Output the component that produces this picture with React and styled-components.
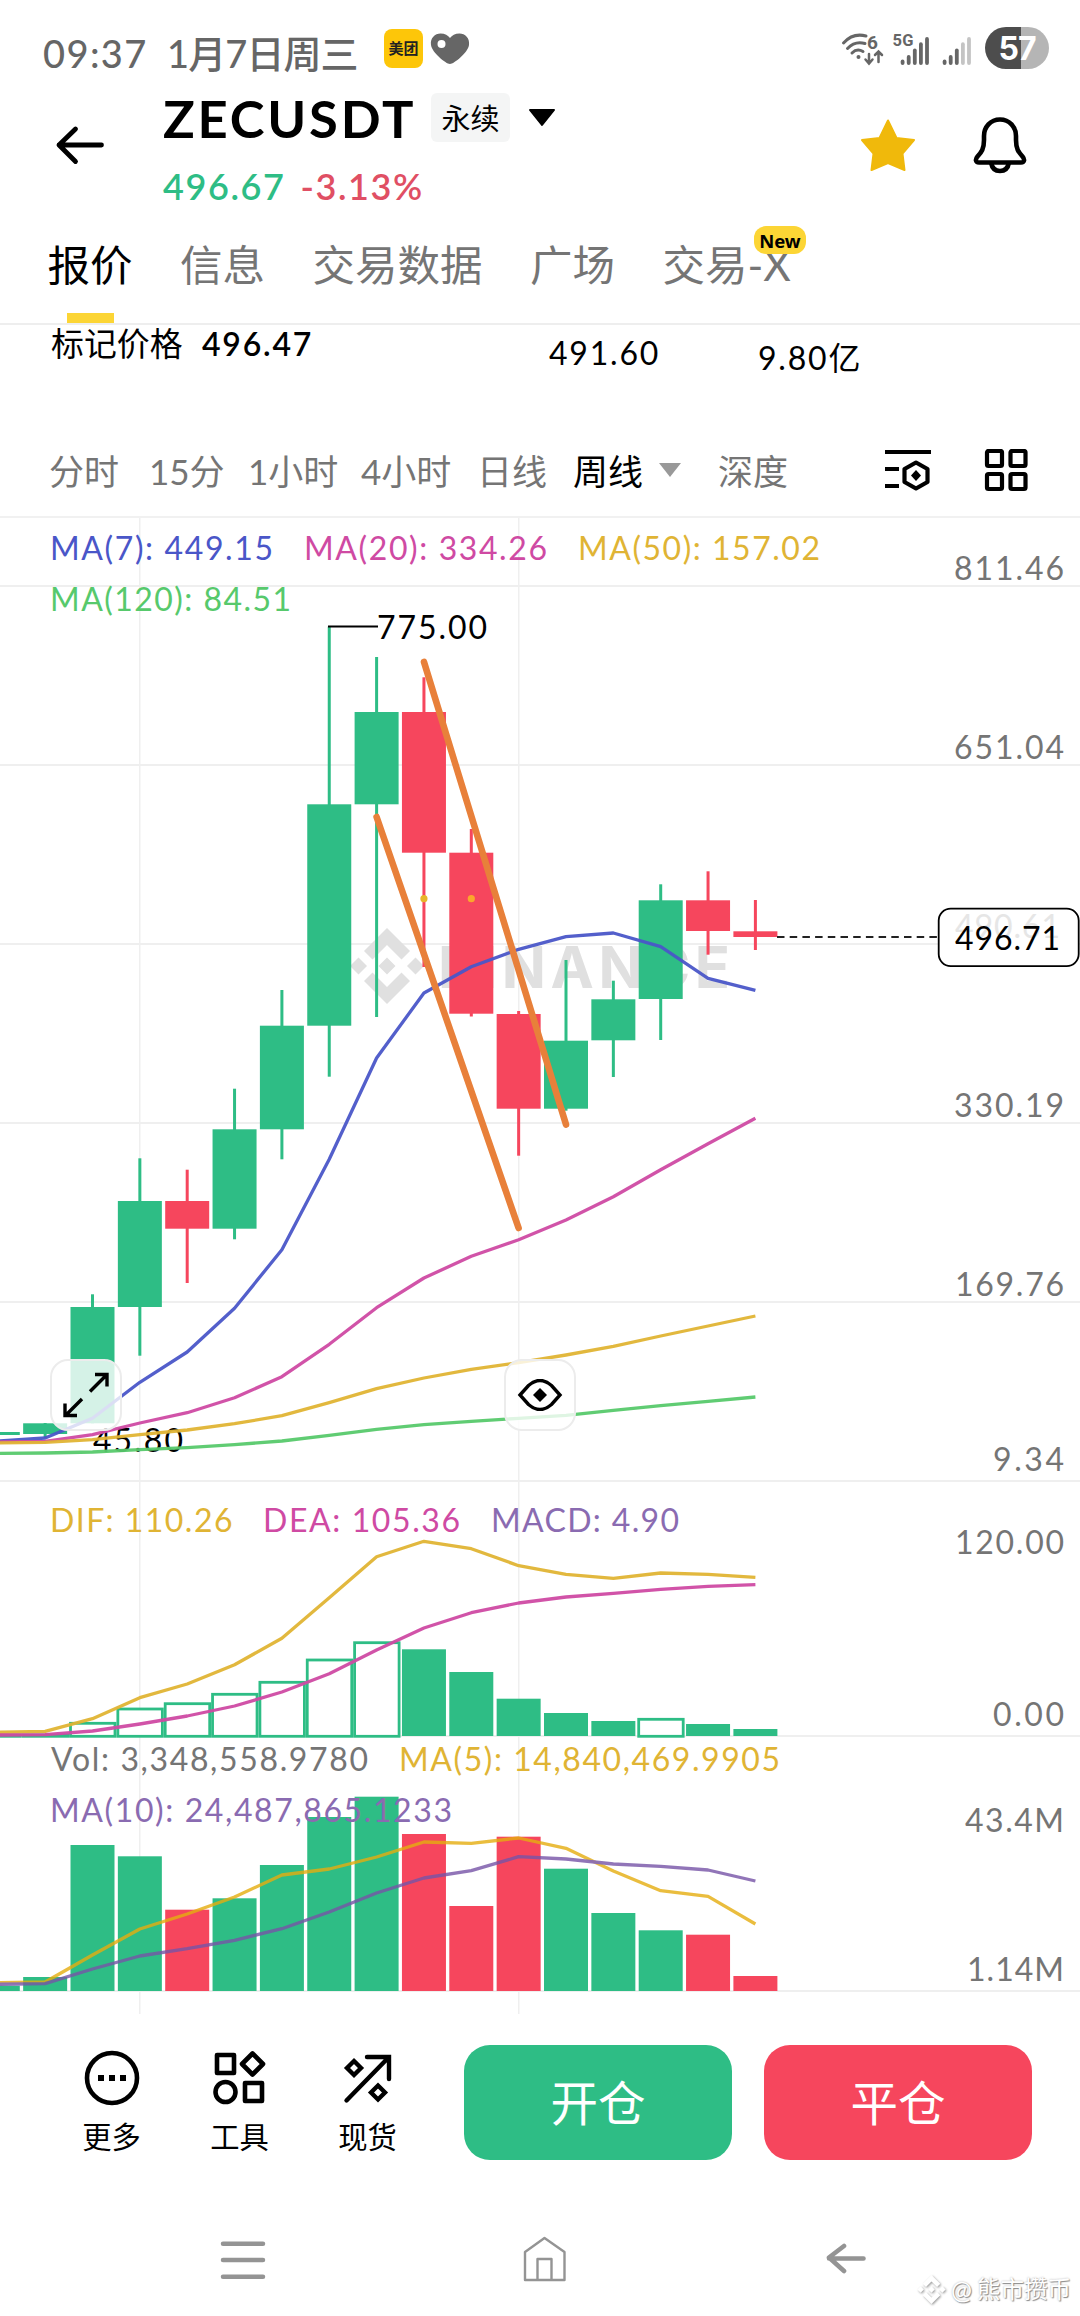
import styled, { createGlobalStyle } from "styled-components"

const up = '#2ebd85'
const down = '#f6465d'
const gold = '#e0b434'
const pink = '#cf4aa3'
const violet = '#8a6bb1'
const blue = '#4a56c8'
const lime = '#57c96c'
const grey = '#757575'

const GlobalStyle = createGlobalStyle`
    * { box-sizing: border-box; }
    body {
        margin: 0;
        background: #fff;
        font-family: Lato, "Noto Sans CJK SC", sans-serif;
        color: #000;
    }
`
const Page = styled.div`
    width: 1080px;
    height: 2316px;
    display: flex;
    flex-direction: column;
    background: #fff;
    overflow: hidden;
`

/* status bar */
const StatusBar = styled.div`
    height: 84px;
    flex: none;
    display: flex;
    align-items: flex-start;
    padding: 27px 31px 0 43px;
    color: #666;
`
const Clock = styled.span`
    font-size: 38px;
    line-height: 52px;
    font-weight: 500;
    letter-spacing: ${p => p.$spacing}px;
    width: ${p => p.$w}px;
    white-space: nowrap;
`
const AppBadge = styled.span`
    width: 39px;
    height: 39px;
    margin: 2px 7px 0 0;
    border-radius: 8px;
    background: #fdc609;
    color: #222;
    font-size: 15px;
    font-weight: 700;
    line-height: 38px;
    text-align: center;
`
const StatusIcons = styled.svg`
    margin-left: auto;
`
const Battery = styled.span`
    width: 64px;
    height: 42px;
    margin-left: 14px;
    border-radius: 21px;
    background: linear-gradient(90deg, #4d4d4d 56%, #b5b5b5 56%);
    color: #fff;
    font: 700 32px/43px Inter, sans-serif;
    letter-spacing: -1px;
    text-align: center;
`

/* header */
const Header = styled.header`
    height: 129px;
    flex: none;
    display: flex;
    align-items: flex-start;
    padding: 9px 52px 0 54px;
`
const BackIcon = styled.svg`
    margin-top: 31px;
`
const Title = styled.div`
    margin-left: 58px;
    flex: 1;
`
const NameRow = styled.div`
    display: flex;
    height: 49px;
`
const Name = styled.h1`
    margin: 0;
    width: 268px;
    font-size: 52.5px;
    font-weight: 700;
    line-height: 50px;
    letter-spacing: 2.8px;
    white-space: nowrap;
`
const Tag = styled.span`
    width: 79px;
    height: 49px;
    margin-right: 18px;
    border-radius: 6px;
    background: #f4f5f5;
    font-size: 29px;
    line-height: 51px;
    text-align: center;
`
const Caret = styled.svg`
    margin-top: ${p => p.$top || 0}px;
`
const PriceRow = styled.div`
    display: flex;
    gap: 15px;
    margin-top: 22px;
    font-size: 36px;
    font-weight: 600;
    line-height: 44px;
`
const Price = styled.span`
    color: ${p => p.$color};
    letter-spacing: ${p => p.$spacing}px;
`
const HeaderIcons = styled.div`
    display: flex;
    gap: 56px;
    padding-top: 23px;
`

/* tabs */
const Tabs = styled.nav`
    height: 112px;
    flex: none;
    display: flex;
    gap: 47.5px;
    padding: 22px 0 0 47.5px;
    border-bottom: 2px solid #eee;
`
const Tab = styled.span`
    position: relative;
    font-size: 42.5px;
    line-height: 60px;
    height: 88px;
    white-space: nowrap;
    color: ${p => p.$active ? '#000' : grey};
    ${p => p.$active && `
    &::after {
        content: '';
        position: absolute;
        left: 19px;
        bottom: 0;
        width: 47px;
        height: 10px;
        background: #fcd535;
    }`}
`
const NewBadge = styled.em`
    position: absolute;
    right: -15px;
    top: -9px;
    width: 52px;
    height: 28px;
    border-radius: 12px;
    background: #fcd535;
    color: #000;
    font: 700 18.5px/29px "Noto Sans", sans-serif;
    text-align: center;
`

/* stats under the tabs */
const Stats = styled.div`
    height: 100px;
    flex: none;
    display: grid;
    grid-template-columns: 498px 209px auto;
    align-items: start;
    padding-left: 51px;
    font-size: 32px;
    line-height: 38px;
`
const Stat = styled.div`
    padding-top: ${p => p.$top || 0}px;
    letter-spacing: 1.8px;
    white-space: nowrap;
`
const StatLabel = styled.span`
    display: inline-block;
    width: 151px;
    font-size: 32.9px;
    letter-spacing: 0;
`
const Strong = styled.b`
    font-weight: 600;
`

/* interval selector */
const Intervals = styled.div`
    height: 93px;
    flex: none;
    display: grid;
    grid-template-columns: 100px 99px 113px 116px 96px 145px 1fr 46px 149px;
    align-items: center;
    padding-left: 49px;
    border-bottom: 2px solid #f1f1f1;
    font-size: 35px;
    line-height: 40px;
`
const Interval = styled.span`
    display: flex;
    align-items: center;
    gap: 15px;
    color: ${p => p.$active ? '#000' : grey};
    white-space: nowrap;
`

/* chart */
const ChartArea = styled.div`
    position: relative;
    height: 1496px;
    flex: none;
`
const ChartSvg = styled.svg`
    display: block;
`
const Floating = styled.button`
    position: absolute;
    left: ${p => p.$left}px;
    top: 841px;
    width: 72px;
    height: 72px;
    padding: 0;
    display: flex;
    align-items: center;
    justify-content: center;
    border: 2px solid #ececec;
    border-radius: 18px;
    background: rgba(255, 255, 255, 0.8);
`

/* bottom */
const Actions = styled.div`
    height: 180px;
    flex: none;
    display: flex;
    align-items: flex-start;
    padding: 31px 48px 0 47.5px;
`
const Tool = styled.div`
    width: 128px;
    display: flex;
    flex-direction: column;
    align-items: center;
    gap: 13px;
    padding-top: 5px;
    font-size: 29.3px;
    line-height: 36px;
`
const TradeButton = styled.button`
    width: 268px;
    height: 115px;
    margin-left: 32px;
    padding: 0;
    border: 0;
    border-radius: 26px;
    background: ${p => p.$color};
    color: #fff;
    font: 400 47.5px/60px Lato, "Noto Sans CJK SC", sans-serif;
`
const FirstTradeButton = styled(TradeButton)`
    margin-left: 32.5px;
`
const SystemNav = styled.div`
    position: relative;
    flex: 1;
    display: flex;
    padding: 41px 0 0 219px;
`
const NavIcon = styled.svg`
    margin-right: ${p => p.$gap || 0}px;
`
const Author = styled.div`
    position: absolute;
    left: 917px;
    top: 78px;
    display: flex;
    align-items: center;
    color: #fff;
    font-size: 23.5px;
    line-height: 34px;
    white-space: nowrap;
    text-shadow: 1px 1px 1px #8a8a8a, 0 0 2px #b5b5b5;
    svg {
        margin-right: 5px;
        filter: drop-shadow(1px 1px 1px #999);
    }
`
const AtSign = styled.span`
    width: 26px;
    font-size: 25px;
`

// x of the n-th candle
const cx = (n) => -2.2 + n * 47.35

// [up?, high, open/close top, open/close bottom, low]
const candles = [
    [1, 1432, 1432, 1435, 1435],
    [1, 1423, 1423.3, 1434, 1438],
    [1, 1294.3, 1307, 1423.3, 1423.3],
    [1, 1158.3, 1201, 1307, 1355.7],
    [0, 1169.7, 1201, 1228.7, 1283],
    [1, 1088.7, 1129.3, 1228.7, 1239.3],
    [1, 990, 1025.7, 1129.3, 1159.3],
    [1, 626.7, 804.3, 1025.7, 1076.7],
    [1, 657, 712, 804.3, 1017],
    [0, 677.3, 712, 852.7, 967],
    [0, 829, 852.7, 1013.7, 1016.5],
    [0, 1011, 1014, 1108.7, 1155.7],
    [1, 960, 1040.7, 1108.7, 1110.7],
    [1, 980.7, 999.3, 1040.3, 1077],
    [1, 884.3, 900.3, 999, 1040],
    [0, 871.3, 900.3, 931, 954.7],
    [0, 900, 931.3, 937, 950],
]

const ma7 = [1441, 1438, 1418.3, 1382.3, 1352, 1308.3, 1249.7, 1159.3, 1058, 993, 966.7, 949.3, 936.7, 933, 946.7, 978.3, 990.3]
const ma20 = [1442, 1441.3, 1434.7, 1423, 1412.7, 1397.7, 1376.7, 1344.3, 1307.7, 1278, 1256.3, 1239.7, 1220, 1196.7, 1169.7, 1143.7, 1118.3]
const ma50 = [1443, 1442.3, 1439.7, 1434.7, 1430, 1423.7, 1415.7, 1402.7, 1388.7, 1378, 1369.3, 1362.7, 1355, 1346.3, 1336, 1326, 1316]
const ma120 = [1453.3, 1453, 1452, 1449.7, 1447.7, 1444.7, 1441, 1435.3, 1429.3, 1424.7, 1421.3, 1418.3, 1415.3, 1410.3, 1405.7, 1401.3, 1397]

const dif = [1732.3, 1731.3, 1718.7, 1697.7, 1684, 1664.7, 1638.3, 1597.7, 1556.7, 1541.3, 1548.7, 1565.7, 1574.3, 1578.3, 1573, 1574.3, 1577.3]
const dea = [1735, 1734.7, 1731, 1724, 1716, 1706, 1692, 1673.7, 1650, 1628, 1612.7, 1603, 1597, 1593.3, 1589.3, 1586.3, 1584.7]
// [top, hollow?]
const macd = [
    [1735, 1], [1735, 1], [1723.3, 1], [1709, 1], [1703.7, 1], [1694.3, 1], [1682.3, 1], [1660, 1], [1642.7, 1],
    [1649.3], [1672], [1698.7], [1713], [1721], [1719.3, 1], [1724], [1729],
]

// [up?, top]
const volume = [
    [1, 1985.7], [1, 1977], [1, 1845], [1, 1856.3], [0, 1909.7], [1, 1898.3], [1, 1865], [1, 1817], [1, 1796.7],
    [0, 1834], [0, 1906], [0, 1836.7], [1, 1868.7], [1, 1913], [1, 1930.3], [0, 1934.7], [0, 1976],
]
const vol5 = [1982.7, 1982, 1955, 1929, 1914, 1897, 1875, 1869, 1857, 1842, 1843.3, 1838, 1848.3, 1871, 1890.7, 1896.3, 1924]
const vol10 = [1984.3, 1983.7, 1969, 1956, 1948.7, 1940.3, 1928.7, 1912, 1893, 1878, 1870.7, 1856.7, 1859, 1864, 1866.3, 1870, 1881]

// [text, left, right, baseline, color]
const legends = [
    ['MA(7): 449.15', 50, 273, 560, blue],
    ['MA(20): 334.26', 304, 547, 560, pink],
    ['MA(50): 157.02', 578, 820, 560, gold],
    ['MA(120): 84.51', 50, 291, 610.7, lime],
    ['DIF: 110.26', 50, 232.5, 1532, gold],
    ['DEA: 105.36', 263, 460, 1532, pink],
    ['MACD: 4.90', 491, 679, 1532, violet],
    ['Vol: 3,348,558.9780', 51, 368, 1770.7, grey],
    ['MA(5): 14,840,469.9905', 399, 780, 1770.7, gold],
    ['MA(10): 24,487,865.1233', 50, 452, 1821.7, violet],
]
const axis = [
    ['811.46', 954, 1064, 580],
    ['651.04', 954, 1064, 758.7],
    ['330.19', 954, 1064, 1117],
    ['169.76', 955, 1064, 1296],
    ['9.34', 993, 1064, 1471],
    ['120.00', 955, 1064, 1553.7],
    ['0.00', 993, 1064, 1725.7],
    ['43.4M', 965, 1064, 1831.7],
    ['1.14M', 967, 1064, 1980.7],
]

const Line = ({ data, color }) => (
    <polyline
        points={data.map((y, i) => `${cx(i)},${y}`).join(' ')}
        fill="none" stroke={color} strokeWidth="3.300" strokeLinejoin="round" opacity="0.95"
    />
)

const Label = ({ text, left, right, y, color }) => (
    <text x={left} y={y} fill={color} textLength={right - left} fontSize="32" fontFamily="Lato, sans-serif">{text}</text>
)

// four chevrons around a diamond, drawn on a 76px box
const Logo = ({ x = 0, y = 0, size = 76, color }) => (
    <svg x={x} y={y} width={size} height={size} viewBox="0 0 76 76" fill={color}>
        <path d="M38 0 L61 23 L52.5 31.500 L38 17 L23.500 31.500 L15 23 Z" />
        <path d="M38 76 L61 53 L52.5 44.500 L38 59 L23.500 44.500 L15 53 Z" />
        <path d="M38 29.500 L46.500 38 L38 46.500 L29.500 38 Z" />
        <path d="M9.500 29.500 L18 38 L9.500 46.500 L1 38 Z" />
        <path d="M66.500 29.500 L75 38 L66.500 46.500 L58 38 Z" />
    </svg>
)

const Chart = () => (
    <ChartArea>
        {/* y runs in screen pixels, the area starts at 518 */}
        <ChartSvg width="1080" height="1496" viewBox="0 518 1080 1496">
            <g fill="#efefef">
                {[585, 764, 943, 1122, 1301, 1480, 1735, 1990].map(y => <rect key={y} x="0" y={y} width="1080" height="2" />)}
                {[139, 518].map(x => <rect key={x} x={x} y="518" width="1.5" height="1496" />)}
            </g>

            <Logo x={349} y={928} color="#e0e0e0" />
            <text x="438" y="987.5" fontSize="58" fontWeight="700" fontFamily="Inter, sans-serif" fill="#e0e0e0" textLength="292">BINANCE</text>

            {candles.map(([isUp, high, top, bottom, low], i) => (
                <g key={i} fill={isUp ? up : down}>
                    <rect x={cx(i) - 1.5} y={high} width="3" height={low - high} />
                    <rect x={cx(i) - 22} y={top} width="44" height={bottom - top} />
                </g>
            ))}

            <rect x="328" y="625.5" width="50" height="2" fill="#000" />
            <Label text="775.00" left={377} right={487} y={638.7} color="#000" />
            <Label text="45.80" left={93} right={183} y={1452.3} color="#000" />

            <Line data={ma7} color={blue} />
            <Line data={ma20} color={pink} />
            <Line data={ma50} color={gold} />
            <Line data={ma120} color={lime} />

            <circle cx={cx(9)} cy="898.7" r="3.6" fill="#e8b52a" />
            <circle cx={cx(10)} cy="898.7" r="3.6" fill="#fba62c" />
            <g stroke="#e8803a" strokeWidth="6.600" strokeLinecap="round">
                <line x1="376.600" y1="817" x2="518.600" y2="1228" />
                <line x1="424" y1="662" x2="566" y2="1124.500" />
            </g>

            <line x1="777" y1="937" x2="938" y2="937" stroke="#222" strokeWidth="2" strokeDasharray="7.500 5.200" />
            <rect x="938.700" y="908.600" width="140" height="57.500" rx="12" fill="#fff" stroke="#000" strokeWidth="1.800" />
            <Label text="490.61" left={955} right={1060} y={937.7} color="#e6e6e6" />
            <Label text="496.71" left={955} right={1060} y={949.7} color="#000" />

            {macd.map(([top, hollow], i) => hollow
                ? <rect key={i} x={cx(i) - 22} y={top} width="44.500" height={1736.3 - top} fill="#fff" stroke={up} strokeWidth="2.800" />
                : <rect key={i} x={cx(i) - 22} y={top} width="44" height={1736 - top} fill={up} />
            )}
            <Line data={dif} color={gold} />
            <Line data={dea} color={pink} />

            {volume.map(([isUp, top], i) => (
                <rect key={i} x={cx(i) - 22} y={top} width="44" height={1991 - top} fill={isUp ? up : down} />
            ))}
            <g opacity="0.85">
                <Line data={vol5} color="#e5ad10" />
                <Line data={vol10} color="#7654a6" />
            </g>

            {legends.map(([text, left, right, y, color]) => (
                <Label key={text} text={text} left={left} right={right} y={y} color={color} />
            ))}
            {axis.map(([text, left, right, y]) => (
                <Label key={text} text={text} left={left} right={right} y={y} color={grey} />
            ))}
        </ChartSvg>

        <Floating $left={50}>
            <svg width="46" height="46" viewBox="0 0 46 46" fill="none" stroke="#000" strokeWidth="3.400">
                <path d="M27 19.500 L43 3.500 M32 2.500 H44 V14.500" />
                <path d="M19 27 L3 43 M2 31.500 V43.500 H14" />
            </svg>
        </Floating>
        <Floating $left={504}>
            <svg width="46" height="32" viewBox="0 0 46 32" fill="none" stroke="#000" strokeWidth="3.400">
                <path d="M3 16 L11.500 6.500 Q23 -3.500 34.500 6.500 L43 16 L34.500 25.500 Q23 35.500 11.500 25.500 Z" />
                <path d="M23 9 L30 16 L23 23 L16 16 Z" fill="#000" stroke="none" />
            </svg>
        </Floating>
    </ChartArea>
)

const Signal = ({ x, faded = 0 }) => (
    <g strokeWidth="3.800" strokeLinecap="round">
        {[34.5, 30, 23.5, 17.2, 12].map((top, i) => (
            <line key={i} x1={x + i * 6.1} x2={x + i * 6.1} y1={top} y2="36" stroke={i >= 5 - faded ? '#c4c4c4' : '#666'} />
        ))}
    </g>
)

const App = () => {

    const intervals = ['分时', '15分', '1小时', '4小时', '日线', '周线', '深度']

    return (
        <Page>
            <GlobalStyle />
            <StatusBar>
                <Clock $w={124} $spacing={1.4}>09:37</Clock>
                <Clock $w={217} $spacing={-0.9}>1月7日周三</Clock>
                <AppBadge>美团</AppBadge>
                <svg width="40" height="42" viewBox="0 0 40 42">
                    <path d="M20 37 C16 37 2 25.500 1 18 C0 11 5 6.500 10.500 6.500 C15 6.500 18 8.500 20 11 C22 8.500 25 6.500 29.500 6.500 C35 6.500 40 11 39 18 C38 25.500 24 37 20 37 Z" fill="#666" />
                    <circle cx="11.500" cy="17" r="4" fill="#fff" />
                </svg>
                <StatusIcons width="130" height="42" viewBox="0 0 130 42">
                    <g fill="none" stroke="#666" strokeWidth="3" strokeLinecap="round">
                        <path d="M2.500 16 Q12 5.500 25 9" />
                        <path d="M6.500 21.500 Q14 13.500 24 16.500" />
                        <path d="M11 26 Q16 21 22 24.500" />
                        <path d="M28 27 V36 M24.500 32.500 L28 36.500 L31.500 32.500" strokeWidth="2.500" />
                        <path d="M37.500 35 V25 M34 28 L37.500 24.500 L41 28" strokeWidth="2.500" />
                    </g>
                    <circle cx="17.500" cy="30" r="2" fill="#666" />
                    <text x="26" y="21.500" fontSize="19" fontWeight="700" fill="#666" fontFamily="Roboto, sans-serif">6</text>
                    <text x="51.500" y="18.500" fontSize="16.500" fontWeight="700" fill="#666" fontFamily="Roboto, sans-serif" textLength="21">5G</text>
                    <Signal x={61.6} />
                    <Signal x={103.6} faded={2} />
                </StatusIcons>
                <Battery>57</Battery>
            </StatusBar>

            <Header>
                <BackIcon width="51" height="42" viewBox="0 0 51 42" fill="none" stroke="#000" strokeWidth="4.800" strokeLinecap="round" strokeLinejoin="round">
                    <path d="M47.500 21 H5 M21.500 5 L5 21 L21.500 37.500" />
                </BackIcon>
                <Title>
                    <NameRow>
                        <Name>ZECUSDT</Name>
                        <Tag>永续</Tag>
                        <Caret $top={15} width="28" height="20" viewBox="0 0 28 20">
                            <path d="M2 2 H26 L14 17 Z" stroke="#000" strokeWidth="2" strokeLinejoin="round" />
                        </Caret>
                    </NameRow>
                    <PriceRow>
                        <Price $color={up} $spacing={1.6}>496.67</Price>
                        <Price $color="#e04f64" $spacing={1.6}>-3.13%</Price>
                    </PriceRow>
                </Title>
                <HeaderIcons>
                    <svg width="56" height="60" viewBox="0 0 56 60">
                        <path d="M28 4.500 L36.500 22 L54 24 L42.500 37.500 L44.500 54 L28 47 L11.500 54 L13.500 37.500 L2 24 L19.500 22 Z" fill="#f0b90b" stroke="#f0b90b" strokeWidth="2" strokeLinejoin="round" />
                    </svg>
                    <svg width="56" height="60" viewBox="0 0 56 60" fill="none" stroke="#000" strokeWidth="4.600" strokeLinejoin="round">
                        <path d="M28 3.500 C18.500 3.500 12 11 12 20 V24 C12 33 9.500 36 5.500 40.500 C3 43.500 3.500 46.500 7 46.500 H49 C52.500 46.500 53 43.500 50.500 40.500 C46.500 36 44 33 44 24 V20 C44 11 37.500 3.500 28 3.500 Z" />
                        <path d="M19 46.500 C20 52 23.500 55 28 55 C32.500 55 36 52 37 46.500" />
                    </svg>
                </HeaderIcons>
            </Header>

            <Tabs>
                <Tab $active>报价</Tab>
                <Tab>信息</Tab>
                <Tab>交易数据</Tab>
                <Tab>广场</Tab>
                <Tab>交易-X<NewBadge>New</NewBadge></Tab>
            </Tabs>

            <Stats>
                <Stat><StatLabel>标记价格</StatLabel><Strong>496.47</Strong></Stat>
                <Stat $top={9}>491.60</Stat>
                <Stat $top={14}>9.80亿</Stat>
            </Stats>

            <Intervals>
                {intervals.map(name => (
                    <Interval key={name} $active={name === '周线'}>
                        {name}
                        {name === '周线' && (
                            <Caret width="24" height="16" viewBox="0 0 24 16"><path d="M1 0 H23 L12 14 Z" fill="#999" /></Caret>
                        )}
                    </Interval>
                ))}
                <svg width="46" height="44" viewBox="0 0 46 44" fill="none" stroke="#000" strokeWidth="4.200">
                    <path d="M0 3 H46 M0 20 H14 M0 37 H14" />
                    <path d="M31 13.500 L42.500 20 V33 L31 39.500 L19.500 33 V20 Z" strokeLinejoin="round" />
                    <path d="M31 21 L36 26.500 L31 32 L26 26.500 Z" fill="#000" stroke="none" />
                </svg>
                <svg width="98" height="44" viewBox="0 0 98 44" fill="none" stroke="#000" strokeWidth="4.200">
                    <rect x="56" y="2" width="15" height="15" rx="1.500" />
                    <rect x="79.500" y="2" width="15" height="15" rx="1.500" />
                    <rect x="56" y="25" width="15" height="15" rx="1.500" />
                    <rect x="79.500" y="25" width="15" height="15" rx="1.500" />
                </svg>
            </Intervals>

            <Chart />

            <Actions>
                <Tool>
                    <svg width="56" height="56" viewBox="0 0 56 56">
                        <circle cx="28" cy="28" r="25" fill="none" stroke="#000" strokeWidth="4.600" />
                        <path d="M14 25 h6 v6 h-6 Z M25 25 h6 v6 h-6 Z M36 25 h6 v6 h-6 Z" />
                    </svg>
                    更多
                </Tool>
                <Tool>
                    <svg width="56" height="56" viewBox="0 0 56 56" fill="none" stroke="#000" strokeWidth="4.600" strokeLinejoin="round">
                        <rect x="5" y="5" width="17" height="18" />
                        <path d="M40.500 3.500 L51 14 L40.500 24.500 L30 14 Z" />
                        <circle cx="13.500" cy="42" r="10" />
                        <rect x="33" y="33" width="17" height="18" />
                    </svg>
                    工具
                </Tool>
                <Tool>
                    <svg width="56" height="56" viewBox="0 0 56 56" fill="none" stroke="#000" strokeWidth="4.400">
                        <path d="M6.500 50.500 L48 8 M27 7 H49 V29" strokeLinecap="round" />
                        <path d="M14 11 L21 18 L14 25 L7 18 Z" />
                        <path d="M38 37 L45 44 L38 51 L31 44 Z" transform="translate(0 -1.500)" />
                    </svg>
                    现货
                </Tool>
                <FirstTradeButton $color={up}>开仓</FirstTradeButton>
                <TradeButton $color={down}>平仓</TradeButton>
            </Actions>

            <SystemNav>
                <NavIcon $gap={255} width="48" height="50" viewBox="0 0 48 50" stroke="#949494" strokeWidth="4.500" strokeLinecap="round">
                    <path d="M4 8.700 H44 M4 25 H44 M4 41.700 H44" />
                </NavIcon>
                <NavIcon $gap={258} width="46" height="50" viewBox="0 0 46 50" fill="none" stroke="#949494" strokeWidth="2.400" strokeLinejoin="round">
                    <path d="M3 17 L22.500 3 L42.500 17 V45 H3 Z M15.500 45 V24 H29.500 V45" />
                </NavIcon>
                <NavIcon width="44" height="50" viewBox="0 0 44 50" fill="none" stroke="#949494" strokeWidth="4.600" strokeLinecap="round" strokeLinejoin="round">
                    <path d="M37.500 23.500 H3 M18 11 L3 22.500 L18 36" />
                </NavIcon>
                <Author>
                    <Logo size={29} color="#fff" />
                    <AtSign>@</AtSign>
                    熊市攒币
                </Author>
            </SystemNav>
        </Page>
    )
}

export default App
